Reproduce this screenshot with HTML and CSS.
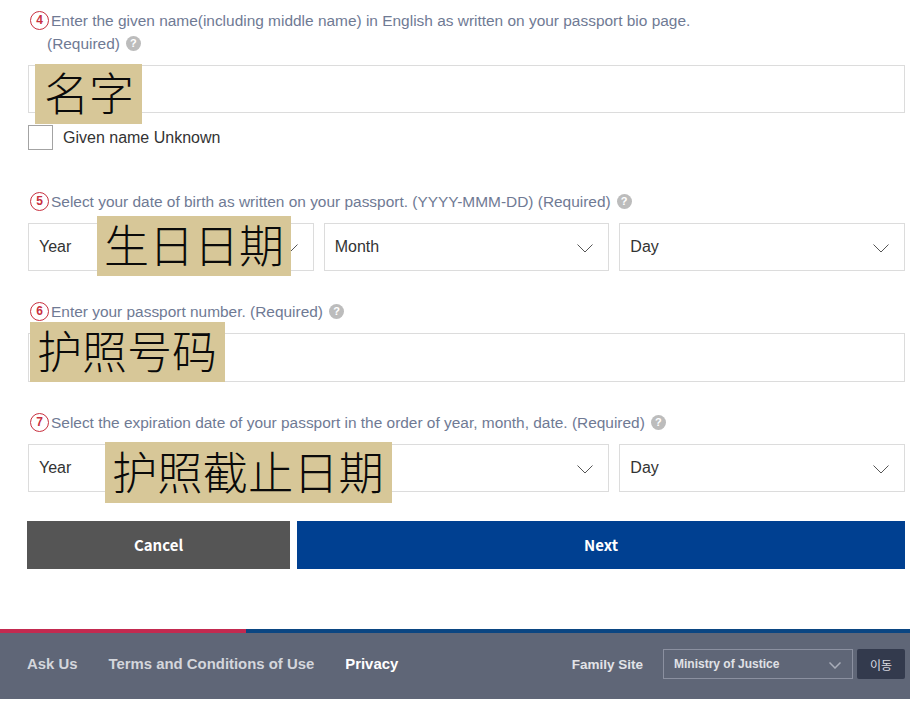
FILE: index.html
```html
<!DOCTYPE html>
<html lang="en">
<head>
<meta charset="utf-8">
<title>Passport information</title>
<link rel="stylesheet" href="styles.css">
</head>
<body>
<main class="form">
  <section class="field field-4">
    <p class="label"><span class="num">4</span>Enter the given name(including middle name) in English as written on your passport bio page.<br><span class="indent">(Required)<span class="help">?</span></span></p>
    <div class="box input"></div>
    <span class="note note-name">名字</span>
    <label class="check"><span class="checkbox"></span>Given name Unknown</label>
  </section>
  <section class="field field-5">
    <p class="label"><span class="num">5</span>Select your date of birth as written on your passport. (YYYY-MMM-DD) (Required)<span class="help">?</span></p>
    <div class="dates">
      <div class="box select">Year<svg class="chev" viewBox="0 0 16 9"><path d="M.5.5 8 8 15.500.5"/></svg></div>
      <div class="box select">Month<svg class="chev" viewBox="0 0 16 9"><path d="M.5.5 8 8 15.500.5"/></svg></div>
      <div class="box select">Day<svg class="chev" viewBox="0 0 16 9"><path d="M.5.5 8 8 15.500.5"/></svg></div>
    </div>
    <span class="note note-birth">生日日期</span>
  </section>
  <section class="field field-6">
    <p class="label"><span class="num">6</span>Enter your passport number. (Required)<span class="help">?</span></p>
    <div class="box input input-tall"></div>
    <span class="note note-number">护照号码</span>
  </section>
  <section class="field field-7">
    <p class="label"><span class="num">7</span>Select the expiration date of your passport in the order of year, month, date. (Required)<span class="help">?</span></p>
    <div class="dates">
      <div class="box select">Year<svg class="chev" viewBox="0 0 16 9"><path d="M.5.5 8 8 15.500.5"/></svg></div>
      <div class="box select"><svg class="chev" viewBox="0 0 16 9"><path d="M.5.5 8 8 15.500.5"/></svg></div>
      <div class="box select">Day<svg class="chev" viewBox="0 0 16 9"><path d="M.5.5 8 8 15.500.5"/></svg></div>
    </div>
    <span class="note note-expiry">护照截止日期</span>
  </section>
  <div class="actions">
    <button class="btn btn-cancel" type="button">Cancel</button>
    <button class="btn btn-next" type="button">Next</button>
  </div>
</main>
<footer class="footer">
  <nav class="links">
    <a>Ask Us</a>
    <a>Terms and Conditions of Use</a>
    <a class="strong">Privacy</a>
  </nav>
  <div class="family">
    <span class="family-label">Family Site</span>
    <div class="family-select">Ministry of Justice<svg class="chev-small" viewBox="0 0 12 7"><path d="M.5.5 6 6 11.500.5"/></svg></div>
    <button class="go" type="button">이동</button>
  </div>
</footer>
</body>
</html>
```
FILE: styles.css
```css
* { box-sizing: border-box; }
html, body { margin: 0; padding: 0; }
body {
  width: 910px;
  height: 703px;
  overflow: hidden;
  background: #fff;
  font-family: "Liberation Sans", Arial, sans-serif;
  font-size: 16px;
  color: #333;
}
.form { padding: 0 5px 0 28px; height: 629px; }
.field { position: relative; }
.field-4 { padding-top: 9px; }
.field-5 { margin-top: 40px; }
.field-6 { margin-top: 29px; }
.field-7 { margin-top: 29px; }
.label {
  margin: 0 0 10px 2px;
  color: #6f7a94;
  font-size: 15.450px;
  line-height: 23px;
  height: 23px;
  white-space: nowrap;
}
.field-4 .label { height: 46px; }
.indent { margin-left: 17px; }
.num {
  display: inline-block;
  width: 19px;
  height: 19px;
  margin-right: 2px;
  border: 1.500px solid #c8303f;
  border-radius: 50%;
  color: #c8303f;
  font-size: 12px;
  font-weight: 700;
  line-height: 16px;
  text-align: center;
  vertical-align: 2px;
}
.help {
  display: inline-block;
  width: 15px;
  height: 15px;
  margin-left: 6px;
  border-radius: 50%;
  background: #bcbcbc;
  color: #fff;
  font-size: 11px;
  font-weight: 700;
  line-height: 15px;
  text-align: center;
  vertical-align: 2px;
}
.box { border: 1px solid #dcdcdc; background: #fff; }
.input { height: 48px; }
.input-tall { height: 49px; }
.check {
  display: flex;
  align-items: center;
  gap: 10px;
  margin-top: 12px;
  height: 25px;
  color: #333;
}
.checkbox { width: 25px; height: 25px; border: 1px solid #a3a3a3; background: #fff; }
.dates { display: flex; gap: 10px; }
.select {
  flex: 1 1 0;
  display: flex;
  align-items: center;
  height: 48px;
  padding: 0 15px 0 10px;
  color: #333;
}
.chev { width: 16px; height: 9px; margin: 3px 0 0 auto; fill: none; stroke: #555; stroke-width: 1; }
.note {
  position: absolute;
  background: #d7c798;
  color: #0a0a0a;
  font-family: "Noto Sans CJK SC", sans-serif;
  font-size: 45px;
  font-weight: 300;
  line-height: 56px;
  padding-bottom: 4px;
  white-space: nowrap;
}
.note-name { left: 7px; top: 64px; padding-left: 9px; width: 107px; }
.note-birth { left: 69px; top: 26px; padding-left: 7px; width: 194px; }
.note-number { left: 2px; top: 22px; padding-left: 7px; width: 195px; }
.note-expiry { left: 77px; top: 31px; padding-left: 7px; padding-bottom: 5px; width: 287px; font-size: 45.300px; }
.actions { display: flex; gap: 7px; margin: 29px 0 0 -1px; }
.btn {
  height: 48px;
  border: 0;
  color: #fff;
  font-family: "Noto Sans CJK KR", "Noto Sans", sans-serif;
  font-size: 15px;
  font-weight: 700;
  padding: 0 0 2px;
}
.btn-cancel { width: 263px; background: #555; }
.btn-next { flex: 1; background: #004091; }
.footer {
  display: flex;
  align-items: center;
  justify-content: space-between;
  height: 70px;
  padding: 4px 5px 4px 27px;
  background: linear-gradient(90deg, #c32a50 246px, #0b4682 246px) top / 100% 4px no-repeat, #5f6677;
}
.links { display: flex; gap: 31px; font-size: 14.900px; font-weight: 700; color: #d4d6dc; }
.links .strong { color: #fff; }
.family { display: flex; align-items: center; }
.family-label { margin-right: 20px; color: #e2e3e7; font-size: 13.500px; font-weight: 700; }
.family-select {
  display: flex;
  align-items: center;
  justify-content: space-between;
  width: 190px;
  height: 30px;
  padding: 0 11px 0 10px;
  border: 1px solid #8b90a0;
  color: #e0e1e6;
  font-size: 12px;
  font-weight: 700;
}
.chev-small { width: 12px; height: 7px; margin-top: 2px; fill: none; stroke: #a9adb9; stroke-width: 1.500; }
.go {
  width: 48px;
  height: 30px;
  margin-left: 4px;
  border: 0;
  border-radius: 2px;
  background: #333a4d;
  color: #d9dbe1;
  font-family: "Noto Sans CJK KR", sans-serif;
  font-size: 12px;
  padding: 0;
}
```
